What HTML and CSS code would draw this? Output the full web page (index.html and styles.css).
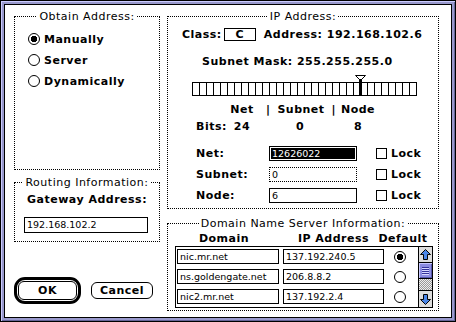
FILE: index.html
```html
<!DOCTYPE html>
<html lang="en">
<head>
	<meta charset="UTF-8">
	<title>MacTCP Configuration</title>
	<link rel="stylesheet" href="styles.css">
</head>
<body>
	<div class="window">
		<div class="dialog">
			<div class="column column-left">
				<section class="group group-obtain">
					<h2 class="group-title">Obtain Address:</h2>
					<div class="radio-list">
						<div class="radio-row"><span class="radio checked"></span>Manually</div>
						<div class="radio-row"><span class="radio"></span>Server</div>
						<div class="radio-row"><span class="radio"></span>Dynamically</div>
					</div>
				</section>

				<section class="group group-routing">
					<h2 class="group-title">Routing Information:</h2>
					<div class="gateway-label">Gateway Address:</div>
					<div class="field gateway-field">192.168.102.2</div>
				</section>

				<div class="buttons">
					<div class="default-ring"><button class="btn btn-ok">OK</button></div>
					<button class="btn btn-cancel">Cancel</button>
				</div>
			</div>

			<div class="column column-right">
				<section class="group group-ip">
					<h2 class="group-title">IP Address:</h2>
					<div class="class-row">
						<span>Class:</span>
						<span class="class-box">C</span>
						<span>Address: 192.168.102.6</span>
					</div>
					<div class="mask-row">Subnet Mask: 255.255.255.0</div>
					<div class="slider">
						<svg class="slider-thumb" width="11" height="21" viewBox="0 0 11 21">
							<path d="M0.5 0.5H10.5L6.5 4.5H4.5Z" fill="#fff" stroke="#000"/>
							<rect x="4" y="4" width="3" height="17" fill="#000"/>
						</svg>
					</div>
					<div class="bits-grid">
						<span></span>
						<span>Net</span>
						<span class="bits-divide"><span>|</span><span>Subnet</span><span>|</span></span>
						<span>Node</span>
						<span class="bits-label">Bits:</span>
						<span>24</span>
						<span>0</span>
						<span>8</span>
					</div>
					<div class="part-list">
						<div class="part-row">
							<span>Net:</span>
							<div class="field field-selected">12626022</div>
							<span class="lock"><span class="checkbox"></span>Lock</span>
						</div>
						<div class="part-row">
							<span>Subnet:</span>
							<div class="field field-dotted">0</div>
							<span class="lock"><span class="checkbox"></span>Lock</span>
						</div>
						<div class="part-row">
							<span>Node:</span>
							<div class="field">6</div>
							<span class="lock"><span class="checkbox"></span>Lock</span>
						</div>
					</div>
				</section>

				<section class="group group-dns">
					<h2 class="group-title">Domain Name Server Information:</h2>
					<div class="dns-head">
						<span class="dns-head-domain">Domain</span>
						<span>IP Address</span>
						<span>Default</span>
					</div>
					<div class="dns-table">
						<div class="dns-rows">
							<div class="field">nic.mr.net</div>
							<div class="field">137.192.240.5</div>
							<span class="radio checked"></span>

							<div class="field">ns.goldengate.net</div>
							<div class="field">206.8.8.2</div>
							<span class="radio"></span>

							<div class="field">nic2.mr.net</div>
							<div class="field">137.192.2.4</div>
							<span class="radio"></span>
						</div>
						<div class="scrollbar">
							<div class="scroll-arrow scroll-up">
								<svg width="11" height="11" viewBox="0 0 11 11">
									<path d="M5.5 0.5L10.5 5.5H7.5V10.5H3.5V5.5H0.5Z" fill="#4a86e8" stroke="#000"/>
								</svg>
							</div>
							<div class="scroll-thumb"><span class="grip"></span></div>
							<div class="scroll-track"></div>
							<div class="scroll-arrow scroll-down">
								<svg width="11" height="11" viewBox="0 0 11 11">
									<path d="M5.5 10.5L10.5 5.5H7.5V0.5H3.5V5.5H0.5Z" fill="#4a86e8" stroke="#000"/>
								</svg>
							</div>
						</div>
					</div>
				</section>
			</div>
		</div>
	</div>
</body>
</html>
```

FILE: styles.css
```css
/* Base */
:root {
	--frame: #9999cc;
	--frame-light: #ccccff;
	--frame-dark: #666699;
	--ui-font: "DejaVu Sans", Verdana, sans-serif;
}

body {
	margin: 0;
	background: #fff;
	font-family: var(--ui-font);
	font-size: 11px;
	font-weight: bold;
	letter-spacing: 0.5px;
	line-height: 13px;
	color: #000;
}

/* Window frame */
.window {
	width: 456px;
	height: 322px;
	box-sizing: border-box;
	border: 1px solid #000;
	padding: 3px;
	background: var(--frame);
	box-shadow: inset 1px 1px 0 var(--frame-light), inset -1px -1px 0 var(--frame-dark);
}

.dialog {
	height: 100%;
	box-sizing: border-box;
	border: 1px solid #000;
	background: #fff;
	display: flex;
	gap: 7px;
	padding: 11px 0 0 9px;
}

.column {
	display: flex;
	flex-direction: column;
}

.column-left {
	width: 146px;
}

.column-right {
	width: 272px;
}

/* Group boxes */
.group {
	border: 1px dotted #000;
	box-sizing: border-box;
}

.group-title {
	display: table;
	margin: -7px auto 0;
	padding: 0 2px;
	background: #fff;
	font-size: 11px;
	font-weight: normal;
	line-height: 13px;
}

.group-obtain {
	height: 154px;
}

.group-routing {
	height: 60px;
	margin-top: 12px;
}

.group-ip {
	height: 193px;
}

.group-dns {
	height: 88px;
	margin-top: 14px;
}

/* Radios and checkboxes */
.radio-list {
	display: flex;
	flex-direction: column;
	gap: 9px;
	margin-top: 10px;
	padding-left: 13px;
}

.radio-row {
	display: flex;
	align-items: center;
	gap: 4px;
	height: 12px;
}

.radio {
	width: 12px;
	height: 12px;
	box-sizing: border-box;
	border: 1px solid #000;
	border-radius: 50%;
	background: #fff;
	flex: none;
}

.radio.checked {
	background: radial-gradient(circle, #000 0 3px, #fff 3.5px);
}

.checkbox {
	width: 11px;
	height: 11px;
	box-sizing: border-box;
	border: 1px solid #000;
	flex: none;
}

/* Text fields */
.field {
	height: 15px;
	box-sizing: border-box;
	border: 1px solid #000;
	padding-left: 2px;
	font-size: 9.5px;
	font-weight: normal;
	letter-spacing: 0;
	line-height: 13px;
	white-space: nowrap;
	overflow: hidden;
}

.field-selected {
	background: #000;
	color: #fff;
	box-shadow: inset 0 0 0 1px #fff;
}

.field-dotted {
	border-style: dotted;
}

/* Routing */
.gateway-label {
	margin-top: 4px;
	text-align: center;
}

.gateway-field {
	width: 124px;
	height: 16px;
	margin: 11px 0 0 9px;
	line-height: 14px;
}

/* Buttons */
.buttons {
	display: flex;
	align-items: center;
	gap: 10px;
	margin-top: 35px;
}

.default-ring {
	display: flex;
	border: 3px solid #000;
	border-radius: 11px;
	padding: 1px;
}

.btn {
	font: inherit;
	letter-spacing: inherit;
	color: #000;
	background: #fff;
	border: 1px solid #000;
	border-radius: 6px;
	padding: 0;
}

.btn-ok {
	width: 59px;
	height: 19px;
}

.btn-cancel {
	width: 62px;
	height: 17px;
}

/* IP address */
.class-row {
	display: flex;
	align-items: center;
	margin-top: 5px;
	padding-left: 14px;
	height: 13px;
}

.class-box {
	width: 32px;
	height: 13px;
	box-sizing: border-box;
	border: 1px solid #000;
	margin: 0 8px 0 2px;
	text-align: center;
	line-height: 11px;
}

.mask-row {
	margin-top: 14px;
	padding-left: 34px;
}

.slider {
	position: relative;
	width: 225px;
	height: 14px;
	box-sizing: border-box;
	margin: 14px 0 0 24px;
	border: 1px solid #000;
	background: repeating-linear-gradient(to right, #fff 0 6px, #000 6px 7px);
}

.slider-thumb {
	position: absolute;
	left: 162px;
	top: -8px;
}

.bits-grid {
	display: grid;
	grid-template-columns: 32px 28px 88px 28px;
	row-gap: 4px;
	margin: 7px 0 0 28px;
}

.bits-grid > span {
	justify-self: center;
	white-space: nowrap;
}

.bits-grid > .bits-label {
	justify-self: start;
}

.bits-grid > .bits-divide {
	justify-self: stretch;
	display: flex;
	justify-content: space-between;
	padding: 0 8px 0 10px;
}

.part-list {
	display: flex;
	flex-direction: column;
	gap: 6px;
	margin: 13px 0 0 28px;
}

.part-row {
	display: grid;
	grid-template-columns: 54px 88px auto;
	column-gap: 19px;
	align-items: center;
	height: 15px;
}

.lock {
	display: flex;
	align-items: center;
	gap: 4px;
}

/* Domain name servers */
.dns-head {
	display: grid;
	grid-template-columns: 102px 101px 30px;
	column-gap: 4px;
	margin: 2px 0 0 9px;
}

.dns-head > span {
	justify-self: center;
	white-space: nowrap;
}

.dns-head > .dns-head-domain {
	margin-right: 8px;
}

.dns-table {
	display: flex;
	width: 258px;
	height: 62px;
	box-sizing: border-box;
	margin: 1px 0 0 7px;
	border: 1px solid #000;
}

.dns-rows {
	flex: 1;
	display: grid;
	grid-template-columns: 102px 101px 1fr;
	grid-auto-rows: 15px;
	column-gap: 4px;
	row-gap: 5px;
	align-content: start;
	align-items: center;
	padding: 2px 0 0 1px;
}

.dns-rows .radio {
	margin-left: 6px;
}

.scrollbar {
	width: 14px;
	box-sizing: border-box;
	border-left: 1px solid #000;
	display: flex;
	flex-direction: column;
}

.scroll-arrow {
	display: flex;
	align-items: center;
	justify-content: center;
	background: #ddd;
}

.scroll-up {
	height: 15px;
	border-bottom: 1px solid #000;
}

.scroll-down {
	height: 16px;
	border-top: 1px solid #000;
}

.scroll-thumb {
	height: 15px;
	border-bottom: 1px solid #000;
	background: #8c8ce0;
	box-shadow: inset 1px 1px 0 #c8c8ff, inset -1px -1px 0 #5555aa;
	display: flex;
	align-items: center;
	justify-content: center;
}

.grip {
	width: 7px;
	height: 8px;
	background: repeating-linear-gradient(to bottom, #333399 0 1px, #d8d8ff 1px 2px);
}

.scroll-track {
	flex: 1;
	background: repeating-conic-gradient(#999 0 25%, #eee 0 50%);
	background-size: 2px 2px;
}
```
